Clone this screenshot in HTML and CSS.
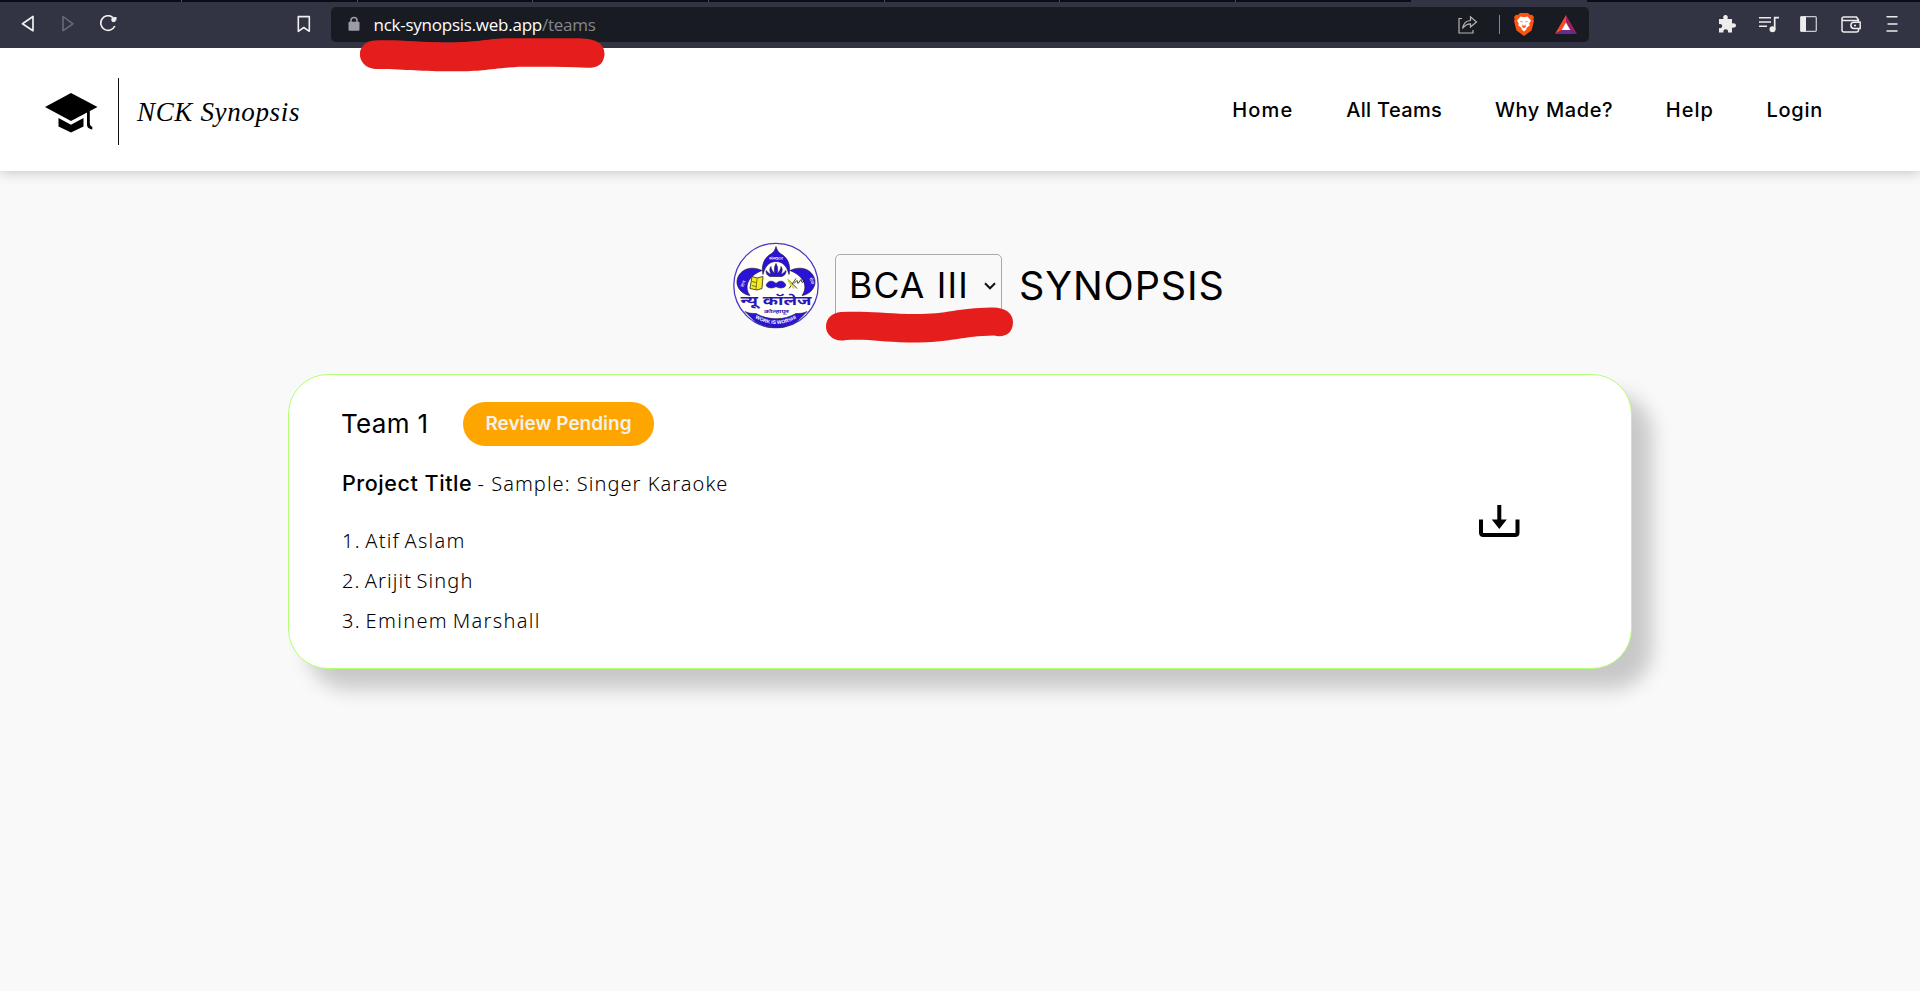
FILE: index.html
```
<!DOCTYPE html>
<html lang="en">
<head>
<meta charset="utf-8">
<title>NCK Synopsis</title>
<link rel="stylesheet" href="styles.css">
</head>
<body>
<div class="toolbar">
  <div class="tabline"><i></i><i></i><i></i><i></i><i></i><i></i><i></i><b></b></div>
  <div class="nav-icons">
    <svg width="16" height="18" viewBox="0 0 16 18" fill="none" stroke="#f0f0f0" stroke-width="1.7" stroke-linejoin="round"><path d="M13 1.500v14.200L2.500 8.800z"/></svg>
    <svg width="16" height="18" viewBox="0 0 16 18" fill="none" stroke="#6a6b77" stroke-width="1.5" stroke-linejoin="round"><path d="M3 1.500v14.200L13 8.800z"/></svg>
    <svg width="20" height="18" viewBox="0 0 20 18" fill="none" stroke="#f0f0f0" stroke-width="1.7"><path d="M13 2.600A7.300 7.300 0 1 0 14.800 11"/><circle cx="13.600" cy="4.800" r="2.400" fill="#f0f0f0" stroke="none"/><path d="M13 2h3.500v3.500z" fill="#f0f0f0" stroke="none"/></svg>
  </div>
  <svg class="bookmark" width="14" height="18" viewBox="0 0 14 18" fill="none" stroke="#f0f0f0" stroke-width="1.600" stroke-linejoin="round"><path d="M1.300 1.600h11v14.700l-5.500-3.800-5.500 3.800z"/></svg>
  <div class="address">
    <svg class="lock" width="12" height="16" viewBox="0 0 12 16"><path d="M3 7V4.400a3 3 0 0 1 6 0V7" fill="none" stroke="#9b9ca5" stroke-width="1.500"/><rect x=".5" y="5.800" width="11" height="9" rx="1" fill="#9b9ca5"/></svg>
    <div class="url">nck-synopsis.web.app<span>/teams</span></div>
    <svg class="share" width="20" height="19" viewBox="0 0 20 19" fill="none" stroke="#b4b5ba" stroke-width="1.200"><path d="M4 3.500H1V18h14v-3M4.500 13.500C5.500 8 8 5.800 12.500 5.500V1.800L18.500 7l-6 5V8.800c-3.500 0-5.500 1.300-8 4.700z"/></svg>
    <div class="bar"></div>
    <svg class="brave" width="20" height="23" viewBox="0 0 20 23"><path d="M6 0h8l2 2 2-.3L20 4l-.7 2 .7 2-2.500 9.500L10 23l-7.500-5.500L0 8l.7-2L0 4l2-2.300L4 2z" fill="#fb5412"/><path d="M6.500 3.500 10 4.200l3.500-.7 3.500 4-1.700 2.800.4 2.200-3.200 2.500 0 1.200L10 18.500l-2.500-2.300V15l-3.200-2.500.4-2.200L3 7.500z" fill="#fff"/><path d="m5.500 7.800 3 .6-.2 1zM14.500 7.800l-3 .6.200 1zM7.500 10.500l1.200 2.500-1 .8 2.300 1.200 2.300-1.200-1-.8 1.200-2.500-1.700 2h-1.600z" fill="#fb5412"/></svg>
    <svg class="bat" width="22" height="19" viewBox="0 0 22 19"><path d="M11 0 0 19l7-4 4-7z" fill="#ff4724"/><path d="m11 0 11 19-7-4-4-7z" fill="#9e1f63"/><path d="m0 19 7-4h8l7 4z" fill="#662d91"/><path d="m11 7.500 4.300 7.500H6.700z" fill="#fff"/></svg>
  </div>
  <div class="tools">
    <svg width="18" height="18" viewBox="0 0 18 18"><path d="M1 4h4.500c-.9-2.300 0-4 2-4s2.900 1.700 2 4H14v4.500c2.100-.6 4 .2 4 2s-1.900 2.600-4 2v5h-4c.5-2.200-.8-3.300-2.300-3.300S5 15.300 5.500 17.500H1v-4.400c2.100.4 3.200-.7 3.200-2.100S3.100 8.700 1 9.200z" fill="#ececec"/></svg>
    <svg width="20" height="17" viewBox="0 0 20 17"><path d="M0 1.700h12M0 6h12M0 10.300h8" stroke="#ececec" stroke-width="1.500"/><circle cx="13.500" cy="13.300" r="3" fill="#ececec"/><path d="M15.700 13.500V1.700H20" fill="none" stroke="#ececec" stroke-width="1.700"/></svg>
    <svg width="17" height="16" viewBox="0 0 17 16"><rect x=".7" y=".7" width="15.600" height="14.600" rx="1" fill="none" stroke="#c9cad0" stroke-width="1.300"/><path d="M.5.500h5.500v15H.5z" fill="#ececec"/></svg>
    <svg width="20" height="17" viewBox="0 0 20 17" fill="none" stroke="#ececec" stroke-width="1.500"><path d="M17.500 6V4.500H3A2 1.700 0 0 1 3 1h12.500l2 3M1 2.700V14a2 2 0 0 0 2 2h12.500a2 2 0 0 0 2-2v-1.500"/><path d="M19.200 6.200v6.300H13a3.100 3.100 0 0 1 0-6.300z"/><path d="M13 9.400h2"/></svg>
    <svg width="12" height="16" viewBox="0 0 12 16" stroke="#ececec" stroke-width="1.500"><path d="M.5.800h11M1.500 8h10M.5 15h11"/></svg>
  </div>
  <svg class="stroke stroke-url" width="248" height="34" viewBox="0 0 248 34"><path d="M15 2.500C45 1.500 60 4.800 92 4.500C125 4 125 .5 155 .3H215C235 0 246 4 245.500 17C244 28 237 30 228 29.800C205 28.500 185 28.500 160 28.800C125 31 125 33.500 92 33.300C60 33.500 45 31 16 31C-4 29 -4 4 15 2.500z"/></svg>
</div>

<header class="site-header">
  <svg class="cap" width="53" height="40" viewBox="0 0 53 40"><path d="M26 0 52.500 14 26 28 0 14z"/><path d="M13.500 25 26 31.700 38.500 25v8.500L26 39.500 13.500 33.500zM42 18h2.800v12.500c.2 2 1 2.500 2.500 3.300v2.700c-3.500-.5-5.600-2.500-5.300-5.500z"/></svg>
  <div class="divider"></div>
  <div class="brand">NCK Synopsis</div>
  <nav class="menu">
    <a class="m-home">Home</a><a class="m-teams">All Teams</a><a class="m-why">Why Made?</a><a class="m-help">Help</a><a class="m-login">Login</a>
  </nav>
</header>

<main>
  <div class="heading">
    <svg class="emblem" width="88" height="88" viewBox="12 6.500 88 88">
      <circle cx="56" cy="50" r="42.200" fill="#fffef8" stroke="#4a35c8" stroke-width="1.300"/>
      <g fill="#2a12d6" stroke="#15132f" stroke-width=".6">
        <path d="M43 39C41 30 44 23 50 19C54 17 55 14 56 11C57 14 58 17 62 19C68 23 71 30 69 39C67 31 63 26 56 26S45 31 43 39z"/>
        <path d="M42 35C27 28 16 38 17 48C18 54 23 59 30 60C24 52 27 41 42 35z"/>
        <path d="M70 35C85 28 96 38 95 48C94 54 89 59 82 60C88 52 85 41 70 35z"/>
        <path d="M56 28c2 4 2 6 1 10C60 36 61 33 61 31c2 3 1 5 0 8 2-1 3-2 5-4 0 4-2 5-4 6H50c-3-1-4-3-4-6 2 2 3 3 5 4-1-3-2-5 0-8 0 2 1 5 4 7C54 34 54 32 56 28z"/>
        <path d="M47 48c3-4 7-2 9 0 2-2 6-4 9 0 3 4-5 6-9 3-4 3-12 1-9-3z"/>
        <path d="M25 76c4 2 7 2 11 2 12 7 28 7 40 0 4 0 7 0 11-2l-9 9C66 94 46 94 34 85z"/>
      </g>
      <path d="m32 41 5 1.500 6-1.500-1 12-5 1.500-7-1.500z" fill="#f5ec25" stroke="#292715" stroke-width=".8"/>
      <path d="m37 43-1 11M32 46l4 1m-4 3 4 1" stroke="#292715" stroke-width=".6"/>
      <path d="m68 44 9 9M69 53l7-10M74 48l3-3 1 3 3-4 1 3 3-2" fill="none" stroke="#292715" stroke-width=".9"/>
      <path d="m68 45 6 8" stroke="#e3dc20" stroke-width="1.600"/>
      <defs><path id="arc" d="M34 82Q56 95 78 82"/></defs>
      <text class="motto"><textPath href="#arc" startOffset="1" textLength="47" lengthAdjust="spacingAndGlyphs">WORK IS WORSHIP</textPath></text>
      <text class="virtue" x="49" y="24" textLength="14" lengthAdjust="spacingAndGlyphs">संस्कार</text>
      <text class="virtue" transform="translate(23 52) rotate(-65)">ज्ञान</text>
      <text class="virtue" transform="translate(89 43) rotate(65)">सेवा</text>
      <text class="college" x="20.500" y="69.500" textLength="71" lengthAdjust="spacingAndGlyphs">न्यू कॉलेज</text>
      <text class="city" x="44" y="77.500" textLength="25" lengthAdjust="spacingAndGlyphs">कोल्हापूर</text>
    </svg>
    <div class="select"><span>BCA III</span>
      <svg width="12" height="8" viewBox="0 0 12 8" fill="none" stroke="#111" stroke-width="2"><path d="m1 1.300 5 5 5-5"/></svg>
      <svg class="stroke stroke-select" width="188" height="36" viewBox="0 0 188 36"><path d="M15 5C40 4 55 6 82 7C120 8 130 1 165 .5C180 0 187 7 187 15C187 27 178 31 168 28.500C135 29 125 36 82 35.500C55 35 45 32 20 33C8 36 0 27 0 20C0 11 6 6 15 5z"/></svg>
    </div>
    <h1>SYNOPSIS</h1>
  </div>

  <section class="card">
    <div class="info">
      <div class="team-row"><h2>Team 1</h2><div class="pill">Review Pending</div></div>
      <div class="project"><b>Project Title</b><span>- Sample: Singer Karaoke</span></div>
      <div class="members">
        <div class="p1">1. Atif Aslam</div>
        <div class="p2">2. Arijit Singh</div>
        <div class="p3">3. Eminem Marshall</div>
      </div>
    </div>
    <svg class="download" width="42" height="33" viewBox="0 0 42 33"><path d="M3 14.500V27.500q0 2.500 2.500 2.500h31.500q2.500 0 2.500-2.500V14.500" fill="none" stroke="#000" stroke-width="4"/><path d="M19.300 0h4v14.500h5.500L21.300 24 13.800 14.500h5.500z"/></svg>
  </section>
</main>
</body>
</html>
```
FILE: styles.css
```
* { box-sizing: border-box; }
body { margin: 0; height: 991px; overflow: hidden; background: #f9f9f9; color: #000; font-family: Inter, sans-serif; }
svg { display: block; flex: none; }
h1, h2 { margin: 0; font-weight: 400; }

.toolbar { position: relative; z-index: 2; height: 48px; background: #323443; display: flex; padding-top: 7px; }
.tabline { position: absolute; top: 0; left: 0; width: 100%; height: 2px; background: #0b0c16; display: flex; gap: 174.700px; padding-left: 181px; }
.tabline i { flex: none; width: 1px; background: #4a4b57; }
.tabline b { flex: none; width: 176px; background: #323443; }
.nav-icons { display: flex; gap: 24px; padding: 8px 0 0 20px; width: 297px; }
.bookmark { margin-top: 8px; }
.address { margin-left: 20px; width: 1258px; height: 35px; border-radius: 5px; background: #191b22; display: flex; align-items: center; }
.lock { margin: 0 0 2px 17px; }
.url { margin-left: 13.500px; width: 1079px; font: 17px/33px "Open Sans", sans-serif; letter-spacing: -0.250px; color: #fff; white-space: nowrap; }
.url span { color: #85868c; }
.share { margin-left: 5px; }
.bar { width: 1px; height: 19px; background: #85868c; margin-left: 21px; }
.brave { margin-left: 14px; }
.bat { margin-left: 21px; }
.tools { flex: 1; display: flex; justify-content: space-between; align-items: center; height: 34px; padding: 0 22px 0 129px; }
.tools svg:nth-child(2) { margin-left: -2px; }
.tools svg:nth-child(3) { margin-left: -4px; }
.stroke { position: absolute; fill: #e61d1d; }
.stroke-url { left: 359px; top: 38px; }

.site-header { height: 123px; background: #fff; box-shadow: 0 2px 12px rgba(0,0,0,.2); display: flex; align-items: center; padding-left: 45px; }
.cap { margin: 7px 0 0; }
.divider { width: 1px; height: 67px; background: #111; margin: 3px 18px 0 20px; }
.brand { font: italic 27px/36px "Liberation Serif", serif; letter-spacing: .650px; padding-top: 4px; white-space: nowrap; }
.menu { margin-left: auto; display: flex; gap: 52.700px; padding-right: 97px; font-size: 20px; line-height: 24px; font-weight: 500; white-space: nowrap; }
.m-home { letter-spacing: 1.200px; }
.m-teams { letter-spacing: .350px; }
.m-why { letter-spacing: .600px; }
.m-help { letter-spacing: .950px; }
.m-login { letter-spacing: .750px; }

.heading { display: flex; align-items: flex-start; padding: 71px 0 0 732px; height: 203px; }
.select { position: relative; margin: 12px 0 0 15px; width: 167px; height: 64px; border: 1px solid #aaa; border-radius: 5px; display: flex; align-items: center; justify-content: space-between; padding: 0 5px 0 13px; font-size: 35.500px; letter-spacing: 1.200px; white-space: nowrap; }
.select span { margin: -1px 0 1px; }
.stroke-select { left: -10px; top: 52px; }
h1 { font-size: 39.500px; line-height: 48px; margin: 20px 0 0 17px; letter-spacing: .900px; }
.emblem { overflow: visible; }
.college { font: 700 13px "Noto Sans Devanagari", "Noto Sans", sans-serif; fill: #2a17b8; }
.city { font: 700 5px "Noto Sans", sans-serif; fill: #2a17b8; }
.motto { font: 700 5px "Liberation Sans", sans-serif; fill: #fff; }
.virtue { font: 4.500px "Noto Sans", sans-serif; fill: #fff; }

.card { width: 1344px; height: 295px; margin-left: 288px; background: #fff; border: 1px solid #b4ff72; border-radius: 40px; box-shadow: 20px 20px 20px rgba(0,0,0,.2); display: flex; justify-content: space-between; padding: 27px 111px 0 53px; }
.team-row { display: flex; align-items: center; height: 44px; }
h2 { font-size: 26px; width: 122px; margin: -1px 0 1px -1px; letter-spacing: .350px; white-space: nowrap; }
.pill { width: 191px; height: 44px; border-radius: 22px; background: orange; color: #f3f1ee; font-weight: 600; font-size: 19px; line-height: 44px; text-align: center; }
.project { display: flex; align-items: baseline; margin-top: 22px; line-height: 30px; white-space: nowrap; }
.project b { width: 135.500px; font-size: 21.500px; font-weight: 500; letter-spacing: .550px; }
.project span, .members { font-family: "Noto Sans", sans-serif; font-weight: 300; font-size: 20px; letter-spacing: 1.040px; }
.members { margin-top: 22px; line-height: 40px; white-space: nowrap; word-spacing: -2px; }
.p1 { letter-spacing: 1.250px; }
.p2 { letter-spacing: 1.100px; }
.p3 { letter-spacing: 1.350px; }
.download { margin-top: 103px; }
```
